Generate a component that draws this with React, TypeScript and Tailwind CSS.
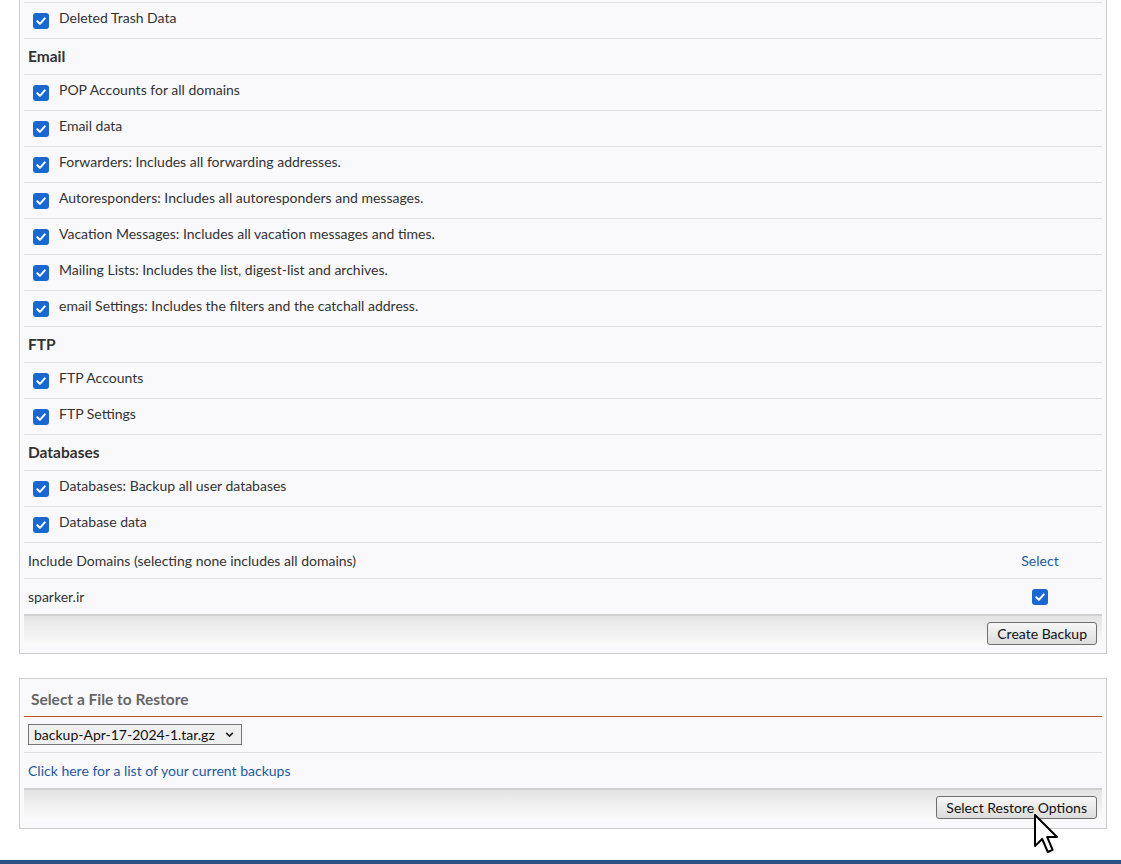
import React from "react";

type Row =
  | { kind: "head"; label: string }
  | { kind: "check"; label: string };

const rows: Row[] = [
  { kind: "check", label: "Deleted Trash Data" },
  { kind: "head", label: "Email" },
  { kind: "check", label: "POP Accounts for all domains" },
  { kind: "check", label: "Email data" },
  { kind: "check", label: "Forwarders: Includes all forwarding addresses." },
  { kind: "check", label: "Autoresponders: Includes all autoresponders and messages." },
  { kind: "check", label: "Vacation Messages: Includes all vacation messages and times." },
  { kind: "check", label: "Mailing Lists: Includes the list, digest-list and archives." },
  { kind: "check", label: "email Settings: Includes the filters and the catchall address." },
  { kind: "head", label: "FTP" },
  { kind: "check", label: "FTP Accounts" },
  { kind: "check", label: "FTP Settings" },
  { kind: "head", label: "Databases" },
  { kind: "check", label: "Databases: Backup all user databases" },
  { kind: "check", label: "Database data" },
];

function Check() {
  return (
    <span className="inline-flex h-[16px] w-[16px] shrink-0 items-center justify-center rounded-[3px] bg-[#1a67d2]">
      <svg width="12" height="12" viewBox="0 0 12 12" fill="none">
        <path d="M2.3 6.3 L4.9 8.8 L9.8 3.4" stroke="#fff" strokeWidth="2" strokeLinecap="round" strokeLinejoin="round" />
      </svg>
    </span>
  );
}

function Button({ children }: { children: React.ReactNode }) {
  return (
    <button className="h-[23px] rounded-[3px] border border-[#707070] bg-gradient-to-b from-[#f7f7f7] to-[#dcdcdc] px-[9px] text-[14px] leading-none text-[#111]">
      {children}
    </button>
  );
}

function Footer({ children }: { children: React.ReactNode }) {
  return (
    <div className="flex h-[32px] items-start justify-end border-t-2 border-[#cfcfcf] bg-gradient-to-b from-[#e4e4e4] to-[#fbfbfb] pr-[5px] pt-[6px]">
      {children}
    </div>
  );
}

export default function App() {
  return (
    <div
      className="relative h-[864px] w-[1121px] overflow-hidden bg-white text-[14px] text-[#333]"
      style={{ fontFamily: "Lato, 'Liberation Sans', sans-serif" }}
    >
      <div className="ml-[19px] w-[1088px] border-x border-b border-[#cccccc] bg-[#f9f8fb] px-[4px] pb-[7px]">
        <div className="h-[2px]" />
        {rows.map((r, i) =>
          r.kind === "head" ? (
            <div key={i} className="flex h-[36px] items-center border-t border-[#dedde1] pl-[4px] text-[15.5px] font-bold">
              {r.label}
            </div>
          ) : (
            <div key={i} className="flex h-[36px] items-center gap-[10px] border-t border-[#dedde1] pl-[9px]">
              <span className="mt-[2px]"><Check /></span>
              <span className="-mt-[6px]">{r.label}</span>
            </div>
          )
        )}
        <div className="flex h-[36px] items-center border-t border-[#dedde1] pl-[4px]">
          <span className="flex-1">Include Domains (selecting none includes all domains)</span>
          <span className="w-[124px] text-center text-[#1f5a9e]">Select</span>
        </div>
        <div className="flex h-[36px] items-center border-t border-[#dedde1] pl-[4px]">
          <span className="flex-1">sparker.ir</span>
          <span className="flex w-[124px] justify-center"><Check /></span>
        </div>
        <Footer>
          <Button>Create Backup</Button>
        </Footer>
      </div>

      <div className="ml-[19px] mt-[24px] w-[1088px] border border-[#cccccc] bg-[#f9f8fb] px-[4px] pb-[8px] pt-[4px]">
        <div className="flex h-[34px] items-center border-b border-[#b4532e] pl-[7px] text-[15.5px] font-bold text-[#666]">
          Select a File to Restore
        </div>
        <div className="flex h-[36px] items-center border-b border-[#dedde1] pl-[4px]">
          <div className="flex h-[21px] w-[214px] items-center justify-between border border-[#767676] bg-[#efefef] pl-[5px] pr-[6px] text-[#111]">
            <span>backup-Apr-17-2024-1.tar.gz</span>
            <svg width="11" height="11" viewBox="0 0 10 10" fill="none">
              <path d="M2 3.5 L5 6.5 L8 3.5" stroke="#222" strokeWidth="1.4" />
            </svg>
          </div>
        </div>
        <div className="flex h-[35px] items-center pl-[4px] text-[#1f5a9e]">
          Click here for a list of your current backups
        </div>
        <Footer>
          <Button>Select Restore Options</Button>
        </Footer>
      </div>

      <div className="absolute bottom-0 left-0 h-[4px] w-full bg-[#2d5180]" />

      <svg className="absolute left-[1033px] top-[813px]" width="26" height="42" viewBox="0 0 13 21">
        <path d="M1 1 L1 16.5 L4.6 13 L7.4 19.5 L9.8 18.4 L7.1 12 L12 12 Z" fill="#fff" stroke="#000" strokeWidth="1" strokeLinejoin="round" />
      </svg>
    </div>
  );
}
